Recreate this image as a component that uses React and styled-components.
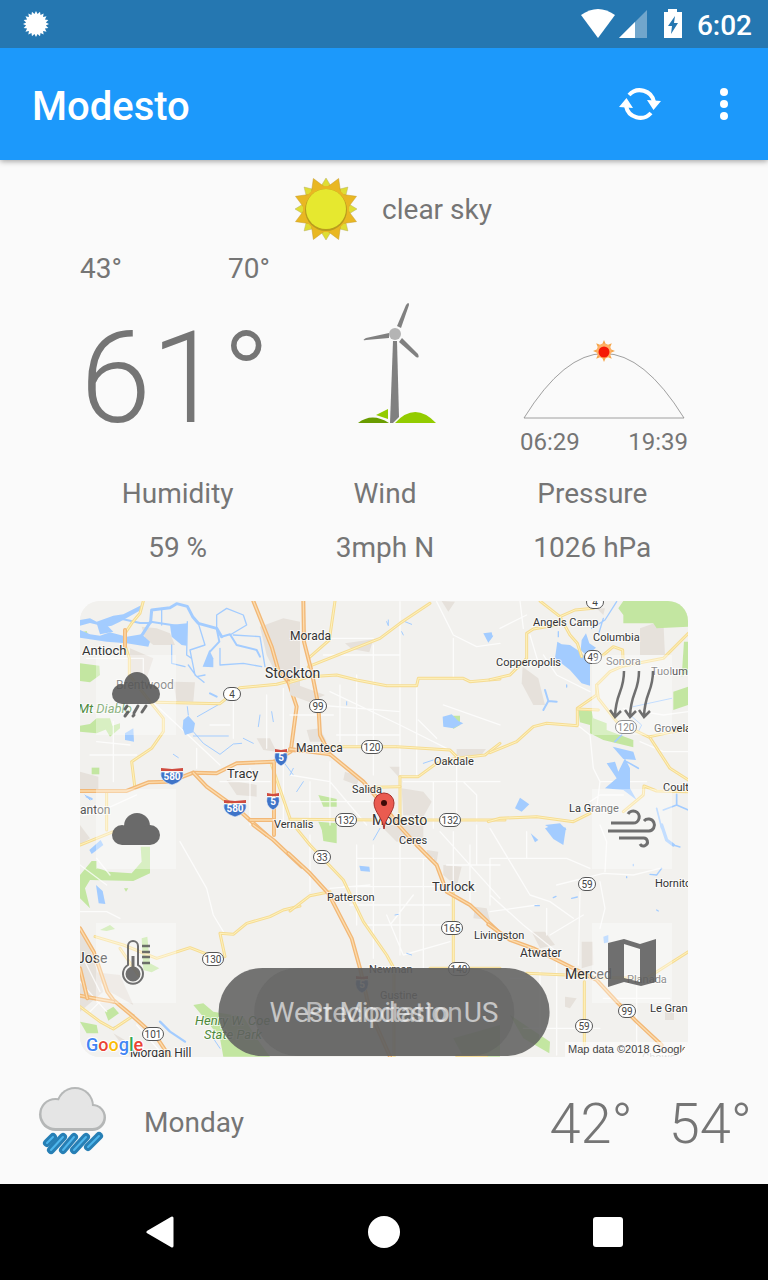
import React from "react";
import styled, { createGlobalStyle } from "styled-components";

const GlobalStyle = createGlobalStyle`
  * { box-sizing: border-box; }
  body {
    margin: 0;
    background: #fafafa;
    color: #757575;
    font-family: Roboto, "Liberation Sans", sans-serif;
    font-size: 28px;
    line-height: 32px;
  }
  svg { display: block; }
`;

const Screen = styled.div`
  display: flex;
  flex-direction: column;
  min-height: 100vh;
`;

const StatusBar = styled.div`
  position: relative;
  z-index: 1;
  display: flex;
  align-items: center;
  justify-content: space-between;
  height: 48px;
  padding: 0 16px 0 20px;
  background: #2577b1;
  color: #fff;
  font-weight: 500;
`;

const StatusIcons = styled.div`
  display: flex;
  align-items: center;
`;

const Clock = styled.time`
  margin-left: 13px;
  padding-top: 4px;
`;

const AppBar = styled.header`
  position: relative;
  display: flex;
  align-items: center;
  height: 112px;
  padding: 0 4px 0 32px;
  background: #1c99fb;
  color: #fff;
  box-shadow: 0 1px 6px rgba(0, 0, 0, 0.4);
`;

const Title = styled.h1`
  flex: 1;
  margin: 0;
  padding-top: 6px;
  font-size: 40px;
  line-height: 48px;
  font-weight: 500;
`;

const IconButton = styled.button`
  display: grid;
  place-items: center;
  width: ${(p) => p.$width || 80}px;
  height: 80px;
  padding: 0;
  border: 0;
  background: none;
  cursor: pointer;
`;

const Main = styled.main`
  flex: 1;
  display: flex;
  flex-direction: column;
  padding-top: 10px;
`;

const Condition = styled.div`
  display: flex;
  align-items: center;
  justify-content: center;
  gap: 8px;
  height: 80px;
  padding-left: 2px;
`;

const ConditionIcon = styled.div`
  display: grid;
  place-items: center;
  width: 96px;
`;

const Panel = styled.section`
  padding: 3px 80px 0;
`;

const Columns = styled.div`
  display: grid;
  grid-template-columns: repeat(3, 1fr);
  column-gap: 16px;
  align-items: ${(p) => p.$align || "start"};
`;

const TempRange = styled.div`
  display: flex;
  justify-content: space-between;
  padding-right: 2px;
`;

const CurrentTemp = styled.div`
  margin-top: 15px;
  font-size: 128px;
  line-height: 156px;
  font-weight: 300;
`;

const Turbine = styled.div`
  display: grid;
  justify-items: center;
  padding-bottom: 32px;
`;

const Daylight = styled.div`
  justify-self: end;
  width: 168px;
`;

const DaylightTimes = styled.div`
  display: flex;
  justify-content: space-between;
  margin-top: 8px;
  font-size: 24px;
  line-height: 28px;
`;

const Metrics = styled(Columns)`
  margin: 22px 0 37px;
  padding-left: 2px;
  text-align: center;
`;

const Metric = styled.dl`
  display: grid;
  row-gap: 22px;
  margin: 0;
  dd { margin: 0; }
`;

const MapCard = styled.div`
  position: relative;
  height: 456px;
  border-radius: 20px;
  overflow: hidden;
  background: #f2f1ee;
`;

const MapArt = styled.svg`
  width: 100%;
  height: 100%;
`;

const LayerControls = styled.div`
  position: absolute;
  inset: 0;
  display: flex;
  justify-content: space-between;
  padding: 54px 16px;
`;

const LayerColumn = styled.div`
  display: flex;
  flex-direction: column;
  justify-content: space-between;
`;

const LayerButton = styled(IconButton)`
  background: rgba(255, 255, 255, 0.35);
  svg { opacity: 0.86; }
`;

const Toast = styled.div`
  position: absolute;
  left: 50%;
  bottom: 1px;
  transform: translateX(-50%);
  height: 88px;
  padding: 29px 51px 0;
  border-radius: 44px;
  white-space: pre;
  background: ${(p) => (p.$fading ? "rgba(92, 92, 92, 0.35)" : "rgba(97, 97, 97, 0.88)")};
  color: ${(p) => (p.$fading ? "rgba(255, 255, 255, 0.55)" : "#fff")};
`;

const Forecast = styled.ul`
  flex: 1;
  margin: 0;
  padding: 0;
  list-style: none;
`;

const Day = styled.li`
  display: flex;
  align-items: center;
  height: 127px;
  padding: 3px 16px 0;
`;

const DayIcon = styled.div`
  width: 112px;
  margin-right: 16px;
  display: grid;
  place-items: center;
`;

const DayName = styled.span`
  flex: 1;
  padding-top: 2px;
`;

const DayTemp = styled.span`
  margin-left: 36px;
  padding-top: 4px;
  font-size: 56px;
  line-height: 64px;
  font-weight: 300;
`;

const NavBar = styled.nav`
  display: flex;
  justify-content: center;
  align-items: center;
  height: 96px;
  background: #000;
`;

function starPoints(cx, cy, outer, inner, count, turn = 0) {
  const pts = [];
  for (let i = 0; i < count * 2; i++) {
    const r = i % 2 ? inner : outer;
    const a = (Math.PI * i) / count + turn - Math.PI / 2;
    pts.push(`${(cx + r * Math.cos(a)).toFixed(2)},${(cy + r * Math.sin(a)).toFixed(2)}`);
  }
  return pts.join(" ");
}

/* ---------- Map data, drawn in six tiles at three units per pixel ---------- */

const tiles = [
  {
    x: 70, y: 595,
    urban: [
      "215,95 260,100 300,115 315,150 250,150 225,130", "570,95 640,70 690,80 690,275 620,240 590,180",
      "470,555 560,570 560,605 500,600", "30,530 85,545 85,590 30,590", "180,160 250,190 230,250 180,230",
      "310,260 375,262 370,320 320,320", "560,430 600,430 620,470 580,465",
    ],
    parks: ["30,205 88,212 90,240 60,262 30,258", "30,392 60,387 80,370 120,370 128,395 80,415 30,410", "65,518 88,518 88,538 65,538", "34,112 50,108 56,125 36,127", "105,400 150,385 150,400 120,425"],
    water: [
      "30,75 60,70 80,80 130,62 160,58 215,30 218,42 150,80 125,92 100,97 85,90 60,84 30,92",
      "30,105 60,118 90,122 120,112 170,125 215,118 240,140 235,155 170,145 110,140 70,134 30,128",
      "80,85 110,90 130,110 90,118", "300,90 352,85 350,152 335,150 305,125", "418,165 430,190 430,217 398,215",
      "340,375 355,362 375,385 370,412 345,420 338,400", "165,415 190,400 192,440 165,435",
    ],
    rivers: [
      [9, "M215 122L242 80 245 45 300 38 320 26 352 34 368 65 385 85 440 100 455 125"],
      [6, "M455 125L480 118 500 150 560 165 570 185M130 66L210 84 242 84M242 80L320 92M440 100L448 140 420 170"],
      [4, "M352 80L350 180 365 190 375 240 402 262M305 150L305 205 345 215M385 85L405 150 360 165 365 190M440 100L440 60 470 40 520 60 530 90 480 120M275 40L275 90M490 120L570 125 585 215M450 160L450 210 520 205 575 215M355 210L380 245 405 240"],
      [3, "M370 410L400 445 450 478 490 447 515 445M382 365L470 315M355 360L352 335M370 423H475M570 360L565 395M310 478L325 488M605 350L610 380M520 430L550 445M640 500L670 540M45 600L60 615"],
      [6, "M50 605L65 612M420 295L440 305"],
    ],
    minor: "M245 318L450 510M50 190H220V250M490 280V430M380 460V520M130 380V560M60 480H200M200 600L90 650 40 660M640 280V690M540 520V690M450 560H600M40 350L180 340M590 300V460M420 390H480M80 440L180 450",
    yellow: ["M220 18L210 55 185 85 165 115", "M165 150L178 190 178 240 240 320 280 370 280 410 245 460 185 500 195 580", "M260 322L450 326 510 278 620 268 690 250", "M605 510L660 670", "M110 590L110 705"],
    orange: ["M165 105V155", "M550 18L605 155 625 225 655 260", "M655 260L680 335 662 470 612 500", "M30 588H170L235 562 300 560 370 533 440 535 500 505 612 500 612 720", "M370 533L410 575 500 640 590 720", "M540 675H612", "M660 465L700 468"],
  },
  {
    x: 290, y: 595,
    urban: ["165,145 250,133 238,172 185,162", "0,262 105,300 60,322 0,300", "298,515 330,515 328,548", "335,580 400,590 425,620 400,665 340,660", "50,405 90,400 110,440 60,440", "165,530 210,545 200,570 160,555", "500,462 588,462 570,485 500,485", "455,18 495,20 475,50"],
    parks: ["85,600 140,612 140,635 100,635", "85,680 140,685 130,730 100,715", "480,362 510,362 510,390 490,402"],
    water: ["458,365 485,358 505,378 520,385 490,400 460,395", "580,115 605,112 608,125 595,143"],
    rivers: [[3, "M295 75V92L290 80M345 80L365 88M40 560L20 590M10 520L0 540M400 505L430 495M170 320V330"], [3, "M335 110L340 120"]],
    minor: "M330 20V540M250 150V540M200 240V450M150 270V440M120 290L330 390 470 460M0 360H130M100 180H330M80 330L330 350M380 270V545M385 375L440 430M490 130V250M440 20L490 120 560 155 630 145M60 560V690M0 540L120 560 230 690M120 500V690M140 420H330M460 330L630 390M500 490V660M340 560H630M430 560V700M0 620H240M520 560L560 600 560 680M0 130H250",
    yellow: ["M135 18L118 135 55 190", "M55 215L270 130 330 85 420 25", "M0 262L60 245 140 240 200 255 290 272 380 272 385 250 520 250 540 260 630 252", "M125 455L320 455 480 465 500 485", "M330 545L385 545 440 505 500 490 585 480 630 445", "M330 545V690", "M250 577L330 575", "M0 673L260 675", "M330 675H645"],
    orange: ["M40 18L42 140 65 230 85 330 90 420 120 478", "M0 462L120 478 220 560 262 610 335 700"],
  },
  {
    x: 490, y: 595,
    urban: ["98,215 145,250 165,330 130,330 95,265", "450,100 520,75 525,180 450,180", "320,40 345,40 340,60"],
    parks: ["400,18 560,18 595,50 595,95 500,100 490,85 400,85 400,60 385,40", "582,140 595,140 595,230 575,245", "550,290 595,275 595,330 550,345", "265,345 305,348 310,370 350,385 350,405 430,435 430,457 340,435 300,415 300,390 270,382", "205,155 235,155 232,175 215,172"],
    water: ["202,140 215,148 240,150 270,170 300,200 300,272 275,265 240,225 195,190", "275,135 288,115 298,145 318,158 290,182 272,165", "350,505 375,500 385,530 405,490 420,520 420,580 440,615 400,585 345,580 380,550", "368,455 430,470 438,495 400,492", "75,640 90,608 118,628 95,650", "165,690 210,685 230,705 190,705", "0,120 10,122 0,135"],
    rivers: [[4, "M305 100L345 75 380 20M205 110V125M230 270V276M340 70L325 120"], [6, "M165 285L175 318 200 320M175 318L160 345"], [5, "M375 440L395 420M410 500L445 520M500 640L515 700M520 645L560 630 560 598M560 630L595 645"], [3, "M420 360L455 390 445 410M430 335L545 310"]],
    minor: "M265 392L300 420 310 520 330 560 320 640M90 18L100 100M160 180L200 240 300 290M110 60L30 100M330 560H470M120 120L150 220M400 340L520 360 595 350M450 440L520 470 595 470M300 620L330 600 400 600",
    yellow: ["M150 18L210 65 240 120 262 145 275 185", "M210 65L255 45 310 40", "M200 90L130 102 110 115 110 190 60 240 0 254", "M0 473L80 440 130 395 170 385 262 392 262 340 320 300 320 270 360 230 400 213 520 190 595 115", "M340 180L370 155 398 165 400 213", "M320 270L325 310 380 380 480 428 540 520 595 555", "M262 342L325 345", "M480 425L595 400", "M-5 680L30 670 140 665 250 680 300 655", "M400 650L460 600 462 573 500 588 595 590"],
    orange: [],
  },
  {
    x: 70, y: 825,
    urban: ["30,310 60,370 100,500 30,560", "60,440 150,450 190,540 120,500", "30,0 60,40 30,60", "130,625 190,660 180,690"],
    parks: ["65,108 80,108 80,128 115,140 185,145 215,110 212,65 240,65 240,145 190,168 60,165 45,190 60,250 30,220 30,150", "162,190 175,190 168,200", "215,340 232,335 240,415 268,430 245,442 220,435", "105,560 130,545 147,565 115,587", "30,590 80,600 85,625 50,625", "370,540 400,535 430,560 520,575 560,640 600,695 460,695 450,640 420,600", "90,315 120,300 135,312 110,318"],
    water: ["58,75 92,45 100,60 65,87", "78,180 98,198 106,237 86,235"],
    rivers: [[7, "M270 590L300 620 345 650"], [3, "M120 610L135 606M430 640L450 670"]],
    minor: "M330 50L410 190 430 270 460 320M30 120L110 180M80 100L120 150M30 470L110 560M40 400L90 500M100 520L60 560M200 600L280 690M30 260H110L150 280",
    yellow: ["M75 335L160 360 260 400 360 368 430 395", "M465 395L450 325 490 328 530 295 600 275 640 255 690 243", "M30 545L90 590 130 612 190 572", "M30 60L130 20", "M205 450L150 370"],
    orange: ["M30 310L72 382 112 500 130 525 190 575 262 640 302 700", "M30 512L100 525 130 530", "M30 430L52 520", "M550 0L610 45 695 125"],
  },
  {
    x: 290, y: 825,
    urban: ["410,75 445,80 440,110 415,100", "460,120 515,125 500,185 460,150", "555,245 590,250 600,285 550,280", "270,0 400,0 400,40 320,50"],
    parks: ["95,10 140,0 140,55 100,48", "490,640 560,620 630,600 630,695 520,695"],
    water: ["208,122 238,125 240,140 212,138"],
    rivers: [[3, "M250 45L270 10M315 270L325 268M350 385L365 390"]],
    minor: "M200 60V300M250 60V400M330 60V390M400 100V430M160 185H460M180 240H480M200 100H430M290 270L340 390 480 350M490 20V200M450 20L630 220M300 300L370 210M540 60V240M560 0V120M470 120H630M120 190L240 180M230 300H480M60 30L60 200",
    yellow: ["M15 5L60 60 160 165 220 290 290 390 312 430 312 695", "M0 258L60 212 120 200", "M490 205V430", "M420 430H630", "M500 692H590"],
    orange: ["M-5 85L60 145 115 205 185 340 210 430 240 560 300 695", "M325 0L380 60 440 120 470 200 540 240 625 320"],
  },
  {
    x: 490, y: 825,
    urban: ["275,350 308,350 310,420 275,430", "125,320 165,320 195,360 150,370", "225,515 260,520 240,550 225,545", "525,560 552,560 552,585 525,585"],
    parks: ["60,570 180,650 178,685 100,640"],
    water: ["165,10 190,0 228,8 220,60 190,42", "340,335 355,330 355,352 342,355", "122,25 145,45 135,52"],
    rivers: [[10, "M515 0L530 45 550 60"], [4, "M550 60L570 66M480 148L500 150 515 130M245 220L262 216M135 242L148 242M190 218L198 214M430 118V122M500 255L505 258M410 155V158"]],
    minor: "M0 10L120 210 180 230 250 280M110 20V100H0M110 100L230 100 300 130M330 0L350 50 345 140M200 180L340 145 430 150 510 130M270 200L265 420M0 210L100 300 200 380M170 250V330M0 260L140 240M330 170L345 250 330 310M200 380V690M120 460H60M330 610H100M150 440V640M0 100V240M340 520H540M440 460V690M280 270L180 330",
    yellow: ["M110 445L230 450 330 458", "M283 470V660", "M330 458L470 460 595 380"],
    orange: ["M-5 298L60 345 130 370 250 430 320 465 380 530 440 590 515 660"],
  },
];

const labels = [
  ["Antioch", 82, 655, 13], ["Brentwood", 116, 689, 12, "#555"], ["Morada", 290, 640, 12], ["Stockton", 265, 678, 14],
  ["Manteca", 296, 752, 12], ["Tracy", 227, 778, 13], ["Salida", 352, 793, 11], ["Oakdale", 434, 765, 11],
  ["Vernalis", 274, 828, 11], ["Modesto", 372, 825, 14], ["Ceres", 399, 844, 11], ["Patterson", 327, 901, 11],
  ["Turlock", 432, 891, 13], ["Livingston", 474, 939, 11], ["Newman", 369, 973, 11], ["Gustine", 380, 999, 11],
  ["Atwater", 520, 957, 12], ["Merced", 565, 979, 14], ["Planada", 627, 983, 11, "#555"], ["Le Gran", 650, 1012, 11],
  ["Hornito", 655, 887, 11], ["La Grange", 569, 812, 11], ["Coult", 663, 791, 11], ["Grovela", 654, 732, 11],
  ["Tuolum", 651, 675, 11, "#555"], ["Sonora", 606, 665, 11, "#555"], ["Columbia", 593, 641, 11], ["Copperopolis", 496, 666, 11],
  ["Angels Camp", 533, 626, 11], ["anton", 80, 814, 12, "#555"], ["Jose", 77, 963, 14], ["Morgan Hill", 130, 1057, 12],
  ["Chowc", 642, 1061, 11, "#aaa"],
];

const parkLabels = [["Mt Diablo", 78, 713], ["Henry W. Coe", 195, 1025], ["State Park", 204, 1039]];

const routes = [
  [4, 232, 694], [99, 318, 706], [120, 372, 747], [132, 346, 820], [132, 450, 820], [33, 322, 857], [4, 595, 602],
  [49, 593, 657], [120, 626, 727], [59, 587, 884], [165, 452, 928], [140, 459, 969], [59, 584, 1026], [99, 627, 1011],
  [130, 213, 959], [101, 153, 1034],
];

const interstates = [[580, 172, 776], [580, 235, 808], [5, 281, 757], [5, 273, 801], [5, 362, 984]];

function Road({ d, casing, fill, width }) {
  return (
    <>
      <path d={d} stroke={casing} strokeWidth={width} />
      <path d={d} stroke={fill} strokeWidth={width / 3} />
    </>
  );
}

function MapTile({ tile }) {
  return (
    <g transform={`translate(${tile.x} ${tile.y}) scale(0.3333)`} fill="none" strokeLinejoin="round" strokeLinecap="round">
      <g fill="#e6e1db">{tile.urban.map((p) => <polygon key={p} points={p} />)}</g>
      <g fill="#c3e6a1">{tile.parks.map((p) => <polygon key={p} points={p} />)}</g>
      <path d={tile.minor} stroke="#fff" strokeWidth="4" opacity="0.75" />
      <g fill="#a3ccff">{tile.water.map((p) => <polygon key={p} points={p} />)}</g>
      {tile.rivers.map(([w, d]) => <path key={d} d={d} stroke="#a3ccff" strokeWidth={w} />)}
      {tile.yellow.map((d) => <Road key={d} d={d} casing="#f5dc94" fill="#fff2bd" width={9} />)}
      {tile.orange.map((d) => <Road key={d} d={d} casing="#f2b877" fill="#fcdcae" width={12} />)}
    </g>
  );
}

function Route({ number, x, y }) {
  const w = String(number).length > 2 ? 21 : 17;
  return (
    <g>
      <rect x={x - w / 2} y={y - 6.5} width={w} height="13" rx="6.5" fill="#fff" stroke="#555" />
      <text x={x} y={y + 4} fontSize="10" textAnchor="middle" fill="#444">{number}</text>
    </g>
  );
}

function Interstate({ number, x, y }) {
  const w = String(number).length > 2 ? 11 : 6;
  return (
    <g>
      <path d={`M${x - w} ${y - 4}H${x + w}Q${x + w + 2} ${y + 5} ${x} ${y + 9}Q${x - w - 2} ${y + 5} ${x - w} ${y - 4}Z`} fill="#3f74c8" stroke="#fff" strokeWidth="0.6" />
      <path d={`M${x - w} ${y - 8}L${x} ${y - 7}L${x + w} ${y - 8}V${y - 5}H${x - w}Z`} fill="#cf4b3f" />
      <text x={x} y={y + 4} fontSize="10" fontWeight="700" textAnchor="middle" fill="#fff">{number}</text>
    </g>
  );
}

function RegionMap() {
  return (
    <MapArt viewBox="80 601 608 456" preserveAspectRatio="xMidYMid slice" role="img" aria-label="Map of Modesto">
      <rect x="80" y="601" width="608" height="456" fill="#f2f1ee" />
      {tiles.map((t) => <MapTile key={`${t.x}-${t.y}`} tile={t} />)}
      {routes.map(([n, x, y]) => <Route key={`${n}-${x}`} number={n} x={x} y={y} />)}
      {interstates.map(([n, x, y]) => <Interstate key={`${n}-${x}`} number={n} x={x} y={y} />)}
      <g stroke="#fff" strokeWidth="2" strokeOpacity="0.7" paintOrder="stroke">
        {labels.map(([t, x, y, size, color]) => (
          <text key={t} x={x} y={y} fontSize={size} fill={color || "#333"}>{t}</text>
        ))}
        {parkLabels.map(([t, x, y]) => (
          <text key={t} x={x} y={y} fontSize="13" fontStyle="italic" fill="#4f8a3c">{t}</text>
        ))}
      </g>
      <path d="M384 829C383 818 374 812 374 803A10 10 0 0 1 394 803C394 812 385 818 384 829Z" fill="#ea5b50" stroke="#a8302a" />
      <circle cx="384" cy="803" r="3" fill="#3d0b08" />
      <text x="86" y="1051" fontSize="18" fontWeight="500" stroke="#fff" strokeWidth="2" paintOrder="stroke">
        <tspan fill="#4285f4">G</tspan><tspan fill="#ea4335">o</tspan><tspan fill="#fbbc05">o</tspan><tspan fill="#4285f4">g</tspan><tspan fill="#34a853">l</tspan><tspan fill="#ea4335">e</tspan>
      </text>
      <rect x="565" y="1042" width="123" height="15" fill="#fff" opacity="0.6" />
      <text x="568" y="1053" fontSize="11" fontFamily="Liberation Sans, sans-serif" fill="#444">Map data ©2018 Google</text>
    </MapArt>
  );
}

/* ---------- Icons ---------- */

const SunIcon = () => (
  <svg width="64" height="64" viewBox="0 0 64 64" aria-hidden="true">
    <polygon points={starPoints(32, 31, 31, 20, 8)} fill="#dfdd33" stroke="#b9b06a" strokeWidth="0.5" />
    <polygon points={starPoints(32, 31, 33, 21, 8, Math.PI / 8)} fill="#e9b722" stroke="#c49a2b" strokeWidth="0.5" />
    <circle cx="32" cy="31" r="23" fill="#e9b722" />
    <circle cx="32" cy="32" r="21" fill="#b99c1d" />
    <circle cx="32" cy="31" r="20" fill="#e6e82f" />
  </svg>
);

const TurbineIcon = () => (
  <svg width="120" height="121" viewBox="324 303 120 121" aria-hidden="true">
    <g fill="#808080">
      <path d="M397 326L406 305Q409 301 409 305L401 328Z" />
      <path d="M389 333L366 338Q361 341 366 340L389 338Z" />
      <path d="M402 338L418 354Q420 359 416 357L399 342Z" />
      <path d="M393 341H397L399 417 393 423H390Z" />
      <circle cx="395" cy="334" r="6" fill="#b4b4b4" />
    </g>
    <path d="M358 423Q372 412 389 423Z" fill="#699c00" />
    <path d="M376 415L388 409V419Q382 417 376 415Z" fill="#93cc00" />
    <path d="M395 423Q415 401 436 423Z" fill="#93cc00" />
  </svg>
);

const DaylightIcon = () => (
  <svg width="100%" height="80" viewBox="520 340 168 80" aria-hidden="true">
    <path d="M524 418Q604 289 684 418Z" fill="none" stroke="#888" strokeWidth="0.8" />
    <polygon points={starPoints(604, 351, 11, 6, 8)} fill="#f5a54a" />
    <circle cx="604" cy="351" r="7.500" fill="#ffb066" />
    <circle cx="604" cy="352" r="5.500" fill="#f51805" />
  </svg>
);

const CloudShape = ({ dy = 0 }) => (
  <g transform={`translate(0 ${dy})`}>
    <circle cx="41" cy="30" r="13" />
    <circle cx="26" cy="39" r="10" />
    <circle cx="54" cy="39" r="10" />
    <rect x="26" y="32" width="28" height="17" />
  </g>
);

const layerIcons = {
  Precipitation: (
    <g fill="#545454">
      <CloudShape />
      <path d="M31 51L29 54M32 57L29 61M42 51L38 58M38 60L37 61M50 51L46 57" stroke="#545454" strokeWidth="3" strokeLinecap="round" />
    </g>
  ),
  Clouds: <g fill="#545454"><CloudShape dy={7} /></g>,
  Temperature: (
    <g fill="none" stroke="#5a5a5a" strokeWidth="2">
      <path d="M32 42V23a5 5 0 0 1 10 0V42a10 10 0 1 1-10 0Z" />
      <circle cx="37" cy="51" r="6.500" fill="#5a5a5a" />
      <path d="M37 50V33" strokeWidth="3" />
      <path d="M46 23h8M46 29h8M46 34h8M46 40h8" strokeWidth="2.500" />
    </g>
  ),
  Pressure: (
    <g fill="none" stroke="#5a5a5a" strokeWidth="2.500">
      {[23, 38, 52].map((x) => (
        <path key={x} d={`M${x + 9} 16C${x + 9} 37 ${x + 1} 37 ${x} 61M${x - 5} 55L${x} 62L${x + 6} 56`} />
      ))}
    </g>
  ),
  Wind: (
    <g fill="none" stroke="#5a5a5a" strokeWidth="3">
      <path d="M19 34H41a6 6 0 1 0-5-9M16 42H57a6 6 0 1 0-5-10M27 49H51a4 4 0 1 1-3 6" />
    </g>
  ),
  Map: <path fillRule="evenodd" fill="#5a5a5a" d="M16 20L32 16 48 21 64 16V59L49 63 32 59 16 64ZM32 21V55L48 59V26Z" />,
};

function Layer({ name }) {
  return (
    <LayerButton type="button" aria-label={name}>
      <svg width="80" height="80" viewBox="0 0 80 80">{layerIcons[name]}</svg>
    </LayerButton>
  );
}

const rainDrops = ["M17 51L11 57", "M27 51L15 64", "M38 51L27 64", "M50 51L38 64", "M63 50L52 61"];

const RainIcon = () => (
  <svg width="72" height="72" viewBox="0 0 72 72" aria-hidden="true">
    <g fill="#b5b7b7">
      <circle cx="19.500" cy="28.500" r="16.500" />
      <circle cx="39" cy="20" r="19" />
      <circle cx="56.500" cy="31.500" r="13.500" />
      <rect x="19" y="28" width="38" height="17" />
    </g>
    <g fill="#e5e5e5">
      <circle cx="19.500" cy="28" r="14" />
      <circle cx="39" cy="20" r="17" />
      <circle cx="56.500" cy="31" r="11" />
      <rect x="19" y="28" width="38" height="14" />
    </g>
    <g strokeLinecap="round">
      {rainDrops.map((d) => <path key={d} d={d} stroke="#277fb5" strokeWidth="8" />)}
      {rainDrops.map((d) => <path key={d} d={d} stroke="#4fb6ec" strokeWidth="2" />)}
    </g>
  </svg>
);

export default function App() {
  return (
    <Screen>
      <GlobalStyle />
      <StatusBar>
        <svg width="32" height="32" viewBox="0 0 32 32" fill="#fff" aria-hidden="true">
          <polygon points={starPoints(16, 16, 13, 10, 20)} />
        </svg>
        <StatusIcons>
          <svg width="104" height="32" viewBox="0 0 104 32" fill="#fff" aria-hidden="true">
            <path d="M1 7Q18-5 35 7L18 30Z" />
            <path d="M39 30L67 2V30Z" opacity="0.35" />
            <path d="M39 30L55 14V30Z" />
            <path fillRule="evenodd" d="M88 1h9v3h5V30H84V4h4ZM95 8L88 18H92L91 26 98 15H94Z" />
          </svg>
          <Clock>6:02</Clock>
        </StatusIcons>
      </StatusBar>
      <AppBar>
        <Title>Modesto</Title>
        <IconButton type="button" aria-label="Refresh" $width={88}>
          <svg width="44" height="36" viewBox="0 0 44 36" fill="none" stroke="#fff" strokeWidth="4">
            <path d="M11 9A14.500 14.500 0 0 1 36 16M33 27A14.500 14.500 0 0 1 8 20" />
            <path d="M29 14L43 15L35.500 24ZM15 22L1 21L8.500 12Z" fill="#fff" stroke="none" />
          </svg>
        </IconButton>
        <IconButton type="button" aria-label="More options">
          <svg width="8" height="36" viewBox="0 0 8 36" fill="#fff">
            <circle cx="4" cy="6" r="4" /><circle cx="4" cy="18" r="4" /><circle cx="4" cy="30" r="4" />
          </svg>
        </IconButton>
      </AppBar>
      <Main>
        <Condition>
          <ConditionIcon><SunIcon /></ConditionIcon>
          clear sky
        </Condition>
        <Panel>
          <Columns $align="end">
            <div>
              <TempRange><span>43°</span><span>70°</span></TempRange>
              <CurrentTemp>61°</CurrentTemp>
            </div>
            <Turbine><TurbineIcon /></Turbine>
            <Daylight>
              <DaylightIcon />
              <DaylightTimes><time>06:29</time><time>19:39</time></DaylightTimes>
            </Daylight>
          </Columns>
          <Metrics>
            <Metric><dt>Humidity</dt><dd>59 %</dd></Metric>
            <Metric><dt>Wind</dt><dd>3mph N</dd></Metric>
            <Metric><dt>Pressure</dt><dd>1026 hPa</dd></Metric>
          </Metrics>
          <MapCard>
            <RegionMap />
            <LayerControls>
              <LayerColumn><Layer name="Precipitation" /><Layer name="Clouds" /><Layer name="Temperature" /></LayerColumn>
              <LayerColumn><Layer name="Pressure" /><Layer name="Wind" /><Layer name="Map" /></LayerColumn>
            </LayerControls>
            <Toast>{"West Modesto  US"}</Toast>
            <Toast $fading>Precipitation</Toast>
          </MapCard>
        </Panel>
        <Forecast>
          <Day>
            <DayIcon><RainIcon /></DayIcon>
            <DayName>Monday</DayName>
            <DayTemp>42°</DayTemp>
            <DayTemp>54°</DayTemp>
          </Day>
        </Forecast>
      </Main>
      <NavBar>
        <IconButton type="button" aria-label="Back" $width={224}>
          <svg width="28" height="34" viewBox="0 0 28 34"><path d="M2 17L26 3V31Z" fill="#fff" stroke="#fff" strokeWidth="3" strokeLinejoin="round" /></svg>
        </IconButton>
        <IconButton type="button" aria-label="Home" $width={224}>
          <svg width="32" height="32"><circle cx="16" cy="16" r="16" fill="#fff" /></svg>
        </IconButton>
        <IconButton type="button" aria-label="Recent apps" $width={224}>
          <svg width="30" height="30"><rect width="30" height="30" rx="3" fill="#fff" /></svg>
        </IconButton>
      </NavBar>
    </Screen>
  );
}
